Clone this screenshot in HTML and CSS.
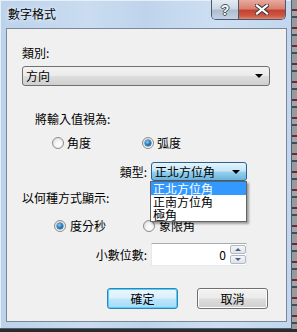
FILE: index.html
```html
<!DOCTYPE html>
<html lang="zh-Hant">
<head>
  <meta charset="UTF-8">
  <meta name="viewport" content="width=device-width, initial-scale=1.0">
  <title>數字格式</title>
  <link rel="stylesheet" href="styles.css">
</head>
<body>
  <div id="screen">
    <div id="window">
      <div class="titlebar">
        <span class="title">數字格式</span>
        <div class="caption">
          <div class="cap help">?</div>
          <div class="cap close">
            <svg width="14" height="11" viewBox="0 0 14 11">
              <path d="M2 1.5 L12 9.5 M12 1.5 L2 9.5" stroke="#3a3a3a" stroke-width="4.2" stroke-linecap="square"/>
              <path d="M2 1.5 L12 9.5 M12 1.5 L2 9.5" stroke="#fff" stroke-width="2.2" stroke-linecap="square"/>
            </svg>
          </div>
        </div>
      </div>
      <div class="client">
        <div class="label cat">類別:</div>
        <div class="combo wide"><span>方向</span><i class="arrow"></i></div>

        <div class="label indent">將輸入值視為:</div>
        <div class="radios first">
          <div class="opt"><i class="radio"></i>角度</div>
          <div class="opt"><i class="radio on"></i>弧度</div>
        </div>
        <div class="field-row type">
          <div class="field-label">類型:</div>
          <div class="picker">
            <div class="combo open"><span>正北方位角</span><i class="arrow"></i></div>
            <ul class="droplist">
              <li class="sel">正北方位角</li>
              <li>正南方位角</li>
              <li>極角</li>
            </ul>
          </div>
        </div>

        <div class="label show">以何種方式顯示:</div>
        <div class="radios second">
          <div class="opt"><i class="radio on"></i>度分秒</div>
          <div class="opt"><i class="radio"></i>象限角</div>
        </div>
        <div class="field-row spin-row">
          <div class="field-label">小數位數:</div>
          <div class="spin">
            <div class="spin-value">0</div>
            <div class="spin-btns">
              <div class="sb up"><i></i></div>
              <div class="sb down"><i></i></div>
            </div>
          </div>
        </div>

        <div class="buttons">
          <div class="btn default">確定</div>
          <div class="btn">取消</div>
        </div>
      </div>
    </div>
    <div class="strip"></div>
  </div>
</body>
</html>
```

FILE: styles.css
```css
html, body {
  margin: 0;
  padding: 0;
}
body {
  width: 297px;
  height: 332px;
  overflow: hidden;
  background: linear-gradient(#4a4a4a, #2b2b2b);
  font-family: "Noto Sans CJK TC", "Liberation Sans", sans-serif;
  font-size: 12px;
  color: #000;
}
#screen {
  display: flex;
  height: 329px;
}
#window {
  width: 291px;
  height: 328px;
  display: flex;
  flex-direction: column;
  background: linear-gradient(90deg, #bcd2eb 0%, #c9dcf0 30%, #bfd4ec 50%, #cddff2 75%, #c2d7ee 100%);
  border-right: 1px solid #4f5f72;
  border-bottom: 1px solid #4f5f72;
  box-shadow: inset 1px 1px 0 #e6f0fa;
}
.strip {
  flex: 1;
  background: repeating-linear-gradient(#9a9a9a 0 9px, #6a2c3c 9px 11px, #a4a4a4 11px 16px, #3d4f5f 16px 18px);
}

/* title bar */
.titlebar {
  height: 28px;
  display: flex;
  align-items: flex-start;
}
.title {
  margin: 6px 0 0 8px;
  line-height: 16px;
  color: #000;
  text-shadow: 0 0 6px #e8f1fa, 0 0 3px #e8f1fa;
}
.caption {
  margin-left: auto;
  margin-right: 5px;
  display: flex;
  height: 19px;
  border: 1px solid #4a5a6e;
  border-top: none;
  border-radius: 0 0 5px 5px;
  overflow: hidden;
}
.cap {
  display: flex;
  align-items: center;
  justify-content: center;
}
.help {
  width: 26px;
  border-right: 1px solid #4a5a6e;
  background: linear-gradient(#e4ebf3 0%, #cdd8e5 45%, #aebdcf 55%, #c4d2e2 100%);
  color: #f4f6f9;
  font-family: "Liberation Sans", sans-serif;
  font-weight: bold;
  font-size: 14px;
  text-shadow: 1px 0 0 #4c5560, -1px 0 0 #4c5560, 0 1px 0 #4c5560, 0 -1px 0 #4c5560;
}
.close {
  width: 46px;
  background: linear-gradient(#e8aa9f 0%, #d98272 45%, #c4412f 55%, #cf5a45 85%, #e08a70 100%);
}

/* client area */
.client {
  flex: 1;
  margin: 0 4px 6px 6px;
  background: #f0f0f0;
  border: 1px solid #7a8797;
  display: flex;
  flex-direction: column;
  line-height: 14px;
}
.label {
  height: 14px;
  margin-left: 15px;
}
.label.cat {
  margin-top: 17px;
}
.label.indent {
  margin-top: 26px;
  margin-left: 28px;
}
.label.show {
  margin-top: 10px;
}

/* combo boxes */
.combo {
  box-sizing: border-box;
  position: relative;
  display: flex;
  align-items: center;
  border: 1px solid #707070;
  border-radius: 3px;
  background: linear-gradient(#f2f2f2 0%, #ebebeb 48%, #dddddd 52%, #cfcfcf 100%);
  padding-left: 3px;
}
.combo.wide {
  margin: 6px 0 0 15px;
  width: 248px;
  height: 20px;
}
.combo.open {
  width: 96px;
  height: 19px;
  border-color: #2c628b;
  background: linear-gradient(#e5f4fc 0%, #c4e5f6 48%, #98d1ef 52%, #68b3db 100%);
}
.arrow {
  position: absolute;
  right: 6px;
  top: 50%;
  margin-top: -2px;
  width: 0;
  height: 0;
  border-left: 4px solid transparent;
  border-right: 4px solid transparent;
  border-top: 4px solid #000;
}

/* radios */
.radios {
  display: flex;
  height: 14px;
}
.radios.first {
  margin: 10px 0 0 45px;
}
.radios.second {
  margin: 14px 0 0 47px;
}
.opt {
  display: flex;
  align-items: center;
  width: 90px;
}
.radios.second .opt {
  width: 89px;
}
.radio {
  box-sizing: border-box;
  width: 12px;
  height: 12px;
  margin-right: 3px;
  border-radius: 50%;
  border: 1px solid #8c8c8c;
  background: radial-gradient(circle at 60% 65%, #ffffff 0%, #f4f4f4 40%, #d4d4d4 100%);
  position: relative;
}
.radio.on::after {
  content: "";
  position: absolute;
  left: 2px;
  top: 2px;
  width: 6px;
  height: 6px;
  border-radius: 50%;
  background: radial-gradient(circle at 40% 35%, #8fd3ff 0%, #1f82c9 45%, #0d3f73 100%);
  box-shadow: 0 0 0 0.5px #1a4a7a;
}
.radios.second .opt .radio {
  margin-right: 4px;
}

/* label + control rows */
.field-row {
  display: flex;
  align-items: center;
}
.field-label {
  width: 140px;
  text-align: right;
  margin-right: 4px;
}
.field-row.type {
  margin-top: 12px;
  height: 19px;
}
.picker {
  position: relative;
}
.droplist {
  position: absolute;
  z-index: 5;
  left: -1px;
  top: 100%;
  margin: 0;
  padding: 0;
  list-style: none;
  width: 97px;
  box-sizing: border-box;
  background: #fff;
  border: 1px solid #646464;
  box-shadow: 2px 2px 2px rgba(0, 0, 0, 0.35);
}
.droplist li {
  height: 13px;
  line-height: 13px;
  padding-left: 2px;
}
.droplist li.sel {
  background: #3399ff;
  color: #fff;
}

/* spin box */
.spin-row {
  margin-top: 10px;
  height: 23px;
}
.spin {
  display: flex;
  width: 96px;
  height: 23px;
  box-sizing: border-box;
  background: #fff;
  border: 1px solid #e3e9ef;
  border-top-color: #abadb3;
}
.spin-value {
  flex: 1;
  text-align: right;
  line-height: 21px;
  padding-right: 4px;
}
.spin-btns {
  width: 16px;
  display: flex;
  flex-direction: column;
  gap: 1px;
  padding: 1px 0;
}
.sb {
  flex: 1;
  box-sizing: border-box;
  border: 1px solid #b2b9c3;
  border-radius: 2px;
  background: linear-gradient(#f4f6f9, #dfe3e9);
  display: flex;
  align-items: center;
  justify-content: center;
}
.sb i {
  width: 0;
  height: 0;
  border-left: 3px solid transparent;
  border-right: 3px solid transparent;
}
.sb.up i {
  border-bottom: 3px solid #4d6185;
}
.sb.down i {
  border-top: 3px solid #4d6185;
}

/* buttons */
.buttons {
  display: flex;
  justify-content: flex-end;
  gap: 19px;
  margin: 22px 18px 0 0;
}
.btn {
  box-sizing: border-box;
  width: 71px;
  height: 21px;
  line-height: 19px;
  text-align: center;
  border: 1px solid #707070;
  border-radius: 3px;
  background: linear-gradient(#f2f2f2 0%, #ebebeb 48%, #dddddd 52%, #cfcfcf 100%);
  box-shadow: inset 0 0 0 1px #fcfcfc;
}
.btn.default {
  border-color: #3c7fb1;
  background: linear-gradient(#eaf6fd 0%, #d9f0fc 48%, #bee6fd 52%, #a7d9f5 100%);
  box-shadow: inset 0 0 0 1px #48d5fc;
}
```
